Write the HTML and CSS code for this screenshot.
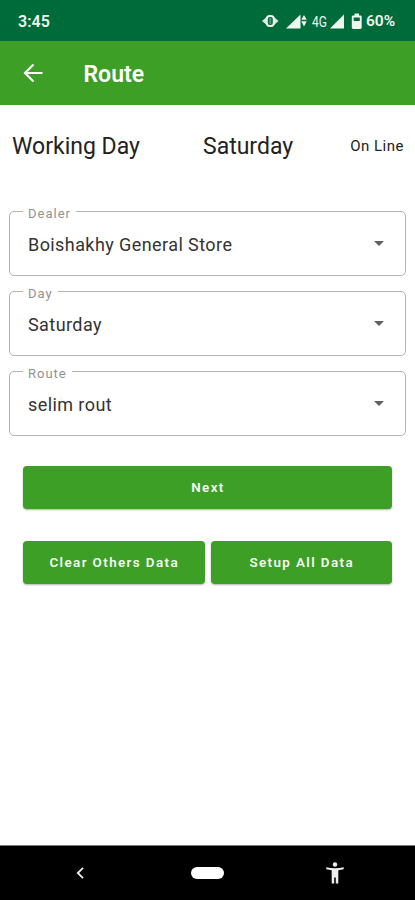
FILE: index.html
```html
<!DOCTYPE html>
<html lang="en">
<head>
<meta charset="utf-8">
<title>Route</title>
<link rel="stylesheet" href="styles.css">
</head>
<body>
<div class="screen">
  <div class="status">
    <span class="clock">3:45</span>
    <svg class="status-icons" width="104" height="20" viewBox="0 0 104 20" fill="#eef7ef">
      <path d="M0 10 4.700 6v8zM16.600 10 11.900 6v8z" opacity=".9"/>
      <rect x="4.800" y="5" width="7" height="10" rx="3" fill="none" stroke="#eef7ef" stroke-width="2"/>
      <rect x="7.300" y="7" width="2" height="6" opacity=".35"/>
      <path d="M24 17.500 38.500 3.500v14z"/>
      <path d="M39.300 8.700 42 4l2.700 4.700zM39.300 10.200 42 15.500l2.700-5.300z"/>
      <path d="M68 17.500 82 3.500v14z"/>
      <path fill-rule="evenodd" d="M92.500 2.500h4.500v1.900h1.400a1.300 1.300 0 0 1 1.300 1.300v10.900a1.300 1.300 0 0 1-1.300 1.300h-7.300a1.300 1.300 0 0 1-1.300-1.300V5.700a1.300 1.300 0 0 1 1.300-1.300h1.400zM91.700 6.500v3.500h6.100V6.500z"/>
      <text class="network" x="50" y="15.500" textLength="15" lengthAdjust="spacingAndGlyphs">4G</text>
    </svg>
    <span class="battery">60%</span>
  </div>
  <header class="appbar">
    <svg width="20" height="20" viewBox="0 0 20 20" fill="none" stroke="#fff" stroke-width="2.200"><path d="M19.500 10H2M10.500 1.500 2 10l8.500 8.500"/></svg>
    <h1>Route</h1>
  </header>
  <main>
    <div class="summary">
      <span class="heading">Working Day</span>
      <span class="heading">Saturday</span>
      <span class="online">On Line</span>
    </div>
    <div class="fields">
      <fieldset class="field"><legend>Dealer</legend><span>Boishakhy General Store</span><i class="caret"></i></fieldset>
      <fieldset class="field"><legend>Day</legend><span>Saturday</span><i class="caret"></i></fieldset>
      <fieldset class="field"><legend>Route</legend><span>selim rout</span><i class="caret"></i></fieldset>
    </div>
    <div class="actions">
      <button class="wide">Next</button>
      <button>Clear Others Data</button>
      <button>Setup All Data</button>
    </div>
  </main>
  <nav class="navbar">
    <svg width="8" height="12" viewBox="0 0 8 12" fill="none" stroke="#eee" stroke-width="1.800"><path d="M7 .8 1.800 6 7 11.200"/></svg>
    <span class="home"></span>
    <svg width="18" height="22" viewBox="0 0 18 22" fill="#eee"><circle cx="9" cy="2.500" r="2.200"/><path d="M.3 5.200Q9 7.400 17.700 5.200V7.300Q15 8 12.300 8.200V21.500H9.800V15.500H8.200V21.500H5.700V8.200Q3 8 .3 7.300z"/></svg>
  </nav>
</div>
</body>
</html>
```

FILE: styles.css
```css
* { box-sizing: border-box; }
body { margin: 0; font-family: Roboto, "Liberation Sans", sans-serif; background: #fff; color: #222; }
.screen { width: 415px; height: 900px; display: flex; flex-direction: column; }
.status { height: 41px; background: #006b3a; color: #eef7ef; display: flex; align-items: center; padding: 1px 18px 0 18px; font-size: 16px; font-weight: 600; }
.clock { flex: 1; }
.network { font-size: 14px; font-weight: 400; }
.battery { width: 31px; font-size: 15.5px; }
.appbar { height: 64px; background: #3d9f26; color: #fff; display: flex; align-items: center; padding: 0 23px; gap: 40.5px; }
h1 { margin: 3px 0 0; font-size: 23px; font-weight: 600; }
main { flex: 1; }
.summary { height: 99px; padding: 0 11px 17px 12px; display: grid; grid-template-columns: 191px 1fr auto; align-items: center; white-space: nowrap; }
.heading { font-size: 23px; }
.online { font-size: 15px; letter-spacing: .5px; padding-bottom: 1px; }
.fields { padding: 0 9px; display: grid; gap: 8px; }
.field { height: 72px; margin: 0; min-width: 0; border: 1.5px solid #b2b2b2; border-radius: 5px; padding: 0 21px 5px 18px; display: flex; align-items: center; justify-content: space-between; font-size: 18px; letter-spacing: .42px; color: #333; }
legend { height: 15px; margin-left: -5px; padding: 0 5px; font-size: 13px; line-height: 19px; color: #929292; letter-spacing: 1px; }
.caret { margin-bottom: 2px; border: 5.5px solid transparent; border-top-color: #606060; border-bottom: 0; }
.actions { padding: 30px 23px 0; display: grid; grid-template-columns: 1fr 1fr; column-gap: 6px; row-gap: 32px; }
button { height: 43px; border: 0; border-radius: 4px; padding: 0 0 0 1px; background: #3d9f26; color: #f4fbf2; font: 600 13.4px Roboto, "Liberation Sans", sans-serif; letter-spacing: 1.4px; box-shadow: 0 1px 2px rgba(0,0,0,.3); }
.wide { grid-column: 1 / -1; }
.navbar { height: 55px; background: #000; border-top: 1px solid #777; display: grid; grid-template-columns: 1fr auto 1fr; align-items: center; padding: 0 71px 0 76px; }
.home { width: 33px; height: 12px; margin-right: 5px; border-radius: 6px; background: #fff; }
.navbar svg:last-child { justify-self: end; }
```
